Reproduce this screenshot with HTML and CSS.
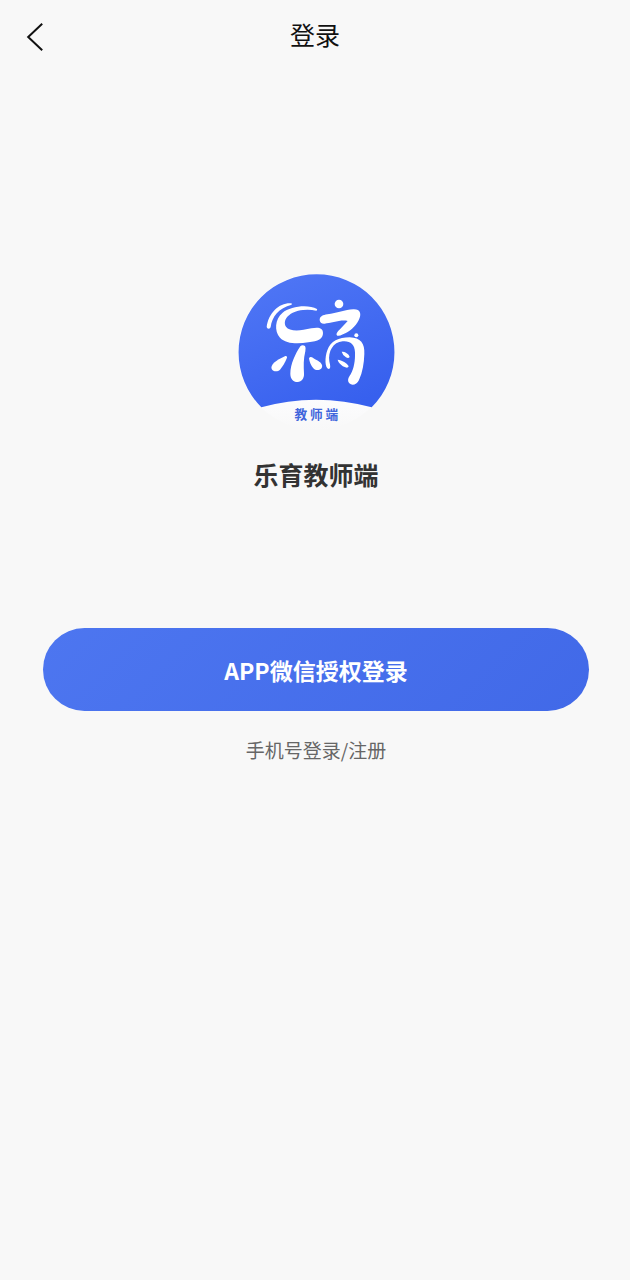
FILE: index.html
```html
<!DOCTYPE html>
<html lang="zh-CN">
<head>
    <meta charset="UTF-8">
    <meta name="viewport" content="width=device-width, initial-scale=1.0">
    <title>登录</title>
    <link rel="stylesheet" href="styles.css">
</head>
<body>

    <header class="navbar">
        <button type="button" class="back-btn" aria-label="返回">
            <svg width="18" height="30" viewBox="0 0 18 30" fill="none" stroke="#111" stroke-width="2">
                <path d="M16.2 1.8 2.2 15l14 13.2"/>
            </svg>
        </button>
        <h1 class="navbar-title">登录</h1>
    </header>

    <main class="login">
        <!-- logo -->
        <svg class="logo" viewBox="36 30 468 468" role="img" aria-label="乐育">
            <defs>
                <linearGradient id="logo-bg" x1="0.2" y1="0" x2="0.7" y2="1">
                    <stop offset="0" stop-color="#4f76f5"/>
                    <stop offset="1" stop-color="#3760ee"/>
                </linearGradient>
                <linearGradient id="logo-base" x1="0" y1="0" x2="0" y2="1">
                    <stop offset="0.75" stop-color="#fdfdff"/>
                    <stop offset="1" stop-color="#f8f8f8"/>
                </linearGradient>
            </defs>
            <circle cx="270" cy="264" r="234" fill="url(#logo-base)"/>
            <path fill="url(#logo-bg)" d="M106 430A234 234 0 1 1 437 430Q355 407 270 407T106 430Z"/>
            <g fill="#fff">
                <path d="M197 118C164 114 128 143 122 189Q123 194 128 194Q133 194 134 189C138 158 158 132 197 122Z"/>
                <path d="M273 135C247 121 194 126 169 147C147 166 144 201 162 221C179 239 213 241 247 235C277 231 291 225 291 207C291 191 277 189 256 193C222 201 190 203 180 188C168 168 190 142 231 138Q252 136 271 140Q275 139 273 135Z"/>
                <path d="M223 247Q229 241 237 246Q240 250 238 262C232 285 233 307 234 328C235 344 227 354 215 354C201 354 193 344 193 329C193 300 209 268 223 247Z"/>
                <path d="M178 276Q184 275 183 281C178 294 170 307 162 317C154 325 141 323 137 315C132 303 149 289 178 276Z"/>
                <path d="M249 283Q252 277 258 280C270 289 284 292 288 303C291 314 279 321 268 317C258 313 251 296 249 283Z"/>
                <circle cx="339" cy="120" r="13"/>
                <path d="M281 168C281 157 291 153 304 151C333 148 357 137 382 136C403 135 408 150 398 169C389 187 370 204 351 211Q335 219 332 213Q329 208 342 196L365 171C344 166 315 178 296 179Q282 180 281 168Z"/>
                <circle cx="391" cy="214" r="6"/>
                <path d="M308 315C296 313 296 280 304 259C314 231 338 220 371 220C404 221 417 239 415 270C414 298 410 325 399 348C393 362 378 366 370 358C363 350 367 341 374 331C384 314 388 289 387 265C386 240 372 230 350 232C321 234 306 263 310 292C313 306 315 314 308 315Z"/>
                <path d="M347 263C357 263 369 269 371 279Q367 285 360 280Q350 274 347 263Z"/>
                <path d="M335 287C347 289 364 297 368 307Q366 313 358 310C348 306 337 297 335 287Z"/>
            </g>
            <text class="logo-text" x="271" y="466" text-anchor="middle">教 师 端</text>
        </svg>
        <h2 class="app-name">乐育教师端</h2>

        <button type="button" class="wechat-btn">APP微信授权登录</button>
        <a class="phone-link" href="#">手机号登录/注册</a>
    </main>

</body>
</html>
```
FILE: styles.css
```css
* {
    box-sizing: border-box;
}

body {
    margin: 0;
    padding: 0;
    font-family: "Noto Sans CJK SC", sans-serif;
    background-color: #f8f8f8;
    color: #333;
}

.navbar {
    display: grid;
    grid-template-columns: 70px 1fr 70px;
    align-items: start;
}

.back-btn {
    display: flex;
    align-items: center;
    height: 74px;
    padding: 0 0 0 26px;
    border: none;
    background: none;
    cursor: pointer;
}

.navbar-title {
    margin: 0;
    font-size: 25px;
    font-weight: 400;
    line-height: 68px;
    text-align: center;
    color: #111;
}

.login {
    display: flex;
    flex-direction: column;
    align-items: center;
    padding: 200px 41px 40px 43px;
}

.logo {
    width: 156px;
    height: 156px;
    overflow: visible;
}

.logo-text {
    font-size: 38px;
    font-weight: 700;
    fill: #4166dc;
}

.app-name {
    margin: 26px 0 136px;
    font-size: 25px;
    font-weight: 700;
    line-height: 36px;
}

.wechat-btn {
    width: 100%;
    height: 83px;
    border: none;
    border-radius: 42px;
    background: linear-gradient(135deg, #4d76f0, #4169e8);
    color: #fff;
    font-family: inherit;
    font-size: 23px;
    font-weight: 700;
    cursor: pointer;
}

.phone-link {
    margin-top: 24px;
    font-size: 19px;
    line-height: 30px;
    color: #666;
    text-decoration: none;
}
```
